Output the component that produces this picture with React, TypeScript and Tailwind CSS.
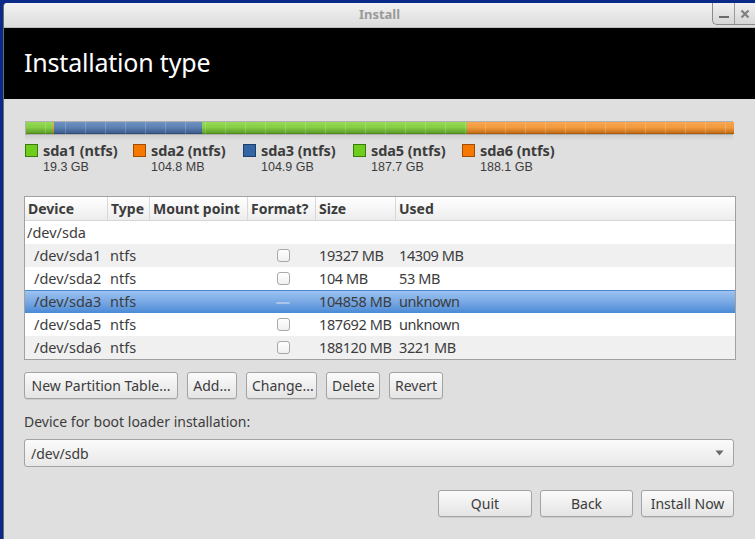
import { useState } from 'react'

type Part = { name: string; size: string; width: number; color: 'green' | 'orange' | 'blue' }

const parts: Part[] = [
  { name: 'sda1', size: '19.3 GB', width: 27, color: 'green' },
  { name: 'sda2', size: '104.8 MB', width: 1, color: 'orange' },
  { name: 'sda3', size: '104.9 GB', width: 148, color: 'blue' },
  { name: 'sda5', size: '187.7 GB', width: 265, color: 'green' },
  { name: 'sda6', size: '188.1 GB', width: 267, color: 'orange' },
]

const segClass = {
  green: 'bg-gradient-to-b from-[#95dc55] via-[#86cc45] to-[#5e9e2a] border-b border-[#4f8a1f]',
  orange: 'bg-gradient-to-b from-[#f8a650] via-[#f29a3e] to-[#c66f16] border-b border-[#a85a0e]',
  blue: 'bg-gradient-to-b from-[#6f92c4] via-[#5d80b2] to-[#3d5e8e] border-b border-[#2f4c78]',
}

const swatchClass = {
  green: 'bg-[#6fcd1e] border-[#3d7a0c]',
  orange: 'bg-[#f57900] border-[#a04d00]',
  blue: 'bg-[#3465a4] border-[#1f3f6a]',
}

const legendWidth = ['w-[108px]', 'w-[110px]', 'w-[110px]', 'w-[109px]', 'w-[110px]']

const rows = [
  { dev: '/dev/sda1', type: 'ntfs', size: '19327 MB', used: '14309 MB' },
  { dev: '/dev/sda2', type: 'ntfs', size: '104 MB', used: '53 MB' },
  { dev: '/dev/sda3', type: 'ntfs', size: '104858 MB', used: 'unknown' },
  { dev: '/dev/sda5', type: 'ntfs', size: '187692 MB', used: 'unknown' },
  { dev: '/dev/sda6', type: 'ntfs', size: '188120 MB', used: '3221 MB' },
]

const cols = 'grid grid-cols-[83px_42px_98px_68px_80px_1fr]'

function Button({ label, className = '' }: { label: string; className?: string }) {
  return (
    <button
      className={`h-[27px] px-[5px] rounded-[3px] border border-[#a3a3a3] bg-gradient-to-b from-[#fbfbfb] to-[#e4e4e4] text-[14px] text-[#3c3c3c] shadow-[0_1px_0_rgba(0,0,0,0.08)] ${className}`}
    >
      {label}
    </button>
  )
}

function Checkbox({ selected }: { selected?: boolean }) {
  if (selected) {
    return <span className="block w-[14px] h-[2px] mt-[2px] rounded bg-[#a9c6ea]" />
  }
  return <span className="block w-[13px] h-[13px] rounded-[3px] border border-[#a8a8a8] bg-gradient-to-b from-white to-[#f0f0f0]" />
}

export default function App() {
  const [selected, setSelected] = useState(2)

  return (
    <div
      className="w-[755px] h-[539px] overflow-hidden bg-[#0a2a8a] pl-[3px] pt-[3px]"
      style={{ fontFamily: '"Noto Sans", "DejaVu Sans", sans-serif' }}
    >
      <div className="h-full flex flex-col bg-[#dfdfdf] border-l border-[#6b6b6b] rounded-tl-[4px] overflow-hidden">
        {/* title bar */}
        <div className="relative h-[25px] shrink-0 flex items-center justify-center bg-gradient-to-b from-[#f2f2f2] to-[#dcdcdc] border-b border-[#bdbdbd]">
          <span className="text-[13px] font-bold text-[#9a9a9a]">Install</span>
          <div className="absolute right-0 top-0 h-[22px] flex border-l border-b border-[#8a8a8a] rounded-bl-[5px] bg-gradient-to-b from-[#f0f0f0] to-[#d6d6d6]">
            <div className="w-[21px] flex items-end justify-center pb-[6px]">
              <span className="block w-[10px] h-[2px] bg-[#6a6a6a]" />
            </div>
            <div className="w-[21px] flex items-center justify-center border-l border-[#9a9a9a]">
              <svg width="10" height="10" viewBox="0 0 10 10">
                <path d="M1.5 1.5 L8.5 8.5 M8.5 1.5 L1.5 8.5" stroke="#808080" strokeWidth="2.2" />
              </svg>
            </div>
          </div>
        </div>

        {/* header */}
        <div className="h-[71px] shrink-0 bg-black flex items-center pl-[20px] pb-[2px]">
          <h1 className="text-[25px] text-white font-normal tracking-[-0.2px]">Installation type</h1>
        </div>

        <div className="flex-1 pl-[20px] pr-[19px] pt-[22px] text-[#3c3c3c]">
          {/* partition bar */}
          <div className="ml-[1px] w-[708px]">
            <div className="relative flex h-[14px] border border-[#6a6a6a]/40">
              {parts.map((p) => (
                <div key={p.name} className={`h-full shrink-0 ${segClass[p.color]}`} style={{ width: p.width }} />
              ))}
              <div className="absolute inset-0 bg-[repeating-linear-gradient(90deg,transparent_0px,transparent_19px,rgba(255,255,255,0.18)_19px,rgba(255,255,255,0.18)_20px)]" />
            </div>
            <div className="h-[6px] bg-gradient-to-b from-[#c8c8c8] to-transparent opacity-70" />
          </div>

          {/* legend */}
          <div className="flex mt-[1px] ml-[1px]">
            {parts.map((p, i) => (
              <div key={p.name} className={`flex ${legendWidth[i]} shrink-0`}>
                <span className={`block w-[13px] h-[13px] mt-[2px] border ${swatchClass[p.color]}`} />
                <div className="ml-[5px] leading-none">
                  <div className="text-[14.5px] font-bold text-[#3c3c3c] leading-[17px] tracking-[-0.1px]">{p.name} (ntfs)</div>
                  <div className="text-[12.5px] text-[#3c3c3c] leading-[16px] font-['Liberation_Sans',sans-serif]">{p.size}</div>
                </div>
              </div>
            ))}
          </div>

          {/* partition table */}
          <div className="mt-[21px] w-[712px] h-[164px] border border-[#a0a0a0] bg-white text-[14.5px]">
            <div className={`${cols} h-[24px] items-center bg-gradient-to-b from-white to-[#ededed] border-b border-[#d6d6d6] font-bold text-[#3c3c3c] text-[14px]`}>
              {['Device', 'Type', 'Mount point', 'Format?', 'Size', 'Used'].map((h, i) => (
                <div key={h} className={`h-full flex items-center pl-[3px] ${i < 5 ? 'border-r border-[#d8d8d8]' : ''}`}>
                  {h}
                </div>
              ))}
            </div>
            <div className={`${cols} h-[23px] items-center`}>
              <div className="pl-[2px]">/dev/sda</div>
            </div>
            {rows.map((r, i) => {
              const isSel = i === selected
              const bg = isSel
                ? 'bg-gradient-to-b from-[#9cc2f0] via-[#78a8e4] to-[#4a8ad6] border-t border-[#4a88d4]'
                : i % 2 === 0
                  ? 'bg-[#f0f0f0]'
                  : 'bg-white'
              return (
                <div
                  key={r.dev}
                  onClick={() => setSelected(i)}
                  className={`${cols} h-[23px] items-center ${bg} text-[#3c3c3c]`}
                >
                  <div className="pl-[9px]">{r.dev}</div>
                  <div className="pl-[2px]">{r.type}</div>
                  <div />
                  <div className="flex justify-center pl-[2px]">
                    <Checkbox selected={isSel} />
                  </div>
                  <div className="pl-[3px] tracking-[-0.4px]">{r.size}</div>
                  <div className="pl-[3px] tracking-[-0.4px]">{r.used}</div>
                </div>
              )
            })}
          </div>

          {/* partition buttons */}
          <div className="flex gap-[9px] mt-[12px]">
            <Button label="New Partition Table..." className="w-[154px]" />
            <Button label="Add..." className="w-[50px]" />
            <Button label="Change..." className="w-[71px]" />
            <Button label="Delete" className="w-[54px]" />
            <Button label="Revert" className="w-[54px]" />
          </div>

          <div className="mt-[12px] text-[14px] text-[#3c3c3c]">Device for boot loader installation:</div>

          <div className="mt-[7px] w-[710px] h-[28px] flex items-center justify-between rounded-[3px] border border-[#a3a3a3] bg-gradient-to-b from-[#fbfbfb] to-[#e8e8e8] pl-[6px] pr-[9px] text-[14px]">
            <span>/dev/sdb</span>
            <svg width="9" height="6" viewBox="0 0 9 6">
              <path d="M0.5 0.5 L8.5 0.5 L4.5 5.5 Z" fill="#6a6a6a" />
            </svg>
          </div>

          <div className="flex justify-end gap-[8px] mt-[23px] w-[710px]">
            <Button label="Quit" className="w-[94px]" />
            <Button label="Back" className="w-[93px]" />
            <Button label="Install Now" className="w-[93px]" />
          </div>
        </div>
      </div>
    </div>
  )
}
